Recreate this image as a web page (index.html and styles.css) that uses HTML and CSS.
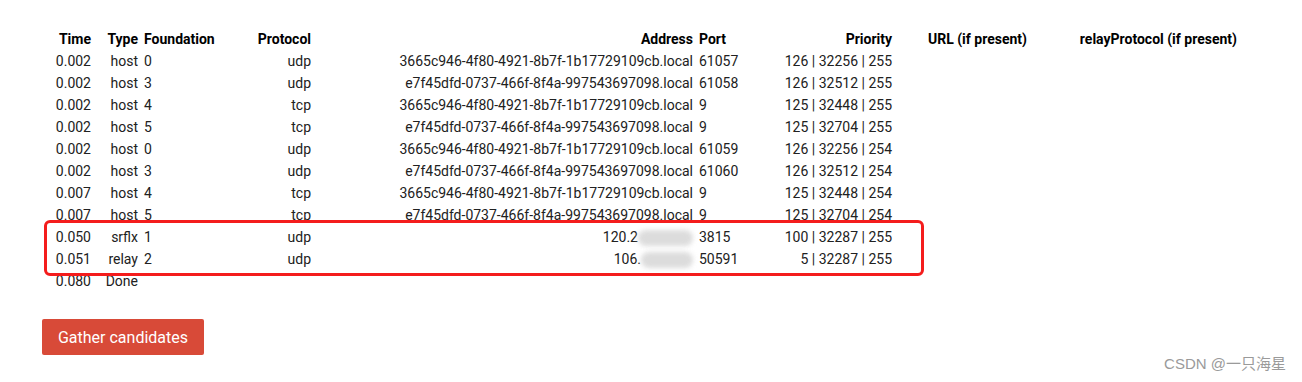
FILE: index.html
```html
<!DOCTYPE html>
<html>
<head>
<meta charset="utf-8">
<link rel="stylesheet" href="styles.css">
</head>
<body>
<main class="page">
  <div class="table-wrap">
    <table class="candidates">
      <colgroup>
        <col class="c-time"><col class="c-type"><col class="c-found"><col class="c-proto">
        <col class="c-addr"><col class="c-port"><col class="c-prio"><col class="c-url"><col class="c-relay">
      </colgroup>
      <thead>
        <tr><th>Time</th><th>Type</th><th class="l">Foundation</th><th>Protocol</th><th>Address</th><th class="l">Port</th><th>Priority</th><th>URL (if present)</th><th>relayProtocol (if present)</th></tr>
      </thead>
      <tbody>
        <tr><td>0.002</td><td>host</td><td class="l">0</td><td>udp</td><td>3665c946-4f80-4921-8b7f-1b17729109cb.local</td><td class="l">61057</td><td>126 | 32256 | 255</td><td></td><td></td></tr>
        <tr><td>0.002</td><td>host</td><td class="l">3</td><td>udp</td><td>e7f45dfd-0737-466f-8f4a-997543697098.local</td><td class="l">61058</td><td>126 | 32512 | 255</td><td></td><td></td></tr>
        <tr><td>0.002</td><td>host</td><td class="l">4</td><td>tcp</td><td>3665c946-4f80-4921-8b7f-1b17729109cb.local</td><td class="l">9</td><td>125 | 32448 | 255</td><td></td><td></td></tr>
        <tr><td>0.002</td><td>host</td><td class="l">5</td><td>tcp</td><td>e7f45dfd-0737-466f-8f4a-997543697098.local</td><td class="l">9</td><td>125 | 32704 | 255</td><td></td><td></td></tr>
        <tr><td>0.002</td><td>host</td><td class="l">0</td><td>udp</td><td>3665c946-4f80-4921-8b7f-1b17729109cb.local</td><td class="l">61059</td><td>126 | 32256 | 254</td><td></td><td></td></tr>
        <tr><td>0.002</td><td>host</td><td class="l">3</td><td>udp</td><td>e7f45dfd-0737-466f-8f4a-997543697098.local</td><td class="l">61060</td><td>126 | 32512 | 254</td><td></td><td></td></tr>
        <tr><td>0.007</td><td>host</td><td class="l">4</td><td>tcp</td><td>3665c946-4f80-4921-8b7f-1b17729109cb.local</td><td class="l">9</td><td>125 | 32448 | 254</td><td></td><td></td></tr>
        <tr><td>0.007</td><td>host</td><td class="l">5</td><td>tcp</td><td>e7f45dfd-0737-466f-8f4a-997543697098.local</td><td class="l">9</td><td>125 | 32704 | 254</td><td></td><td></td></tr>
        <tr><td>0.050</td><td>srflx</td><td class="l">1</td><td>udp</td><td>120.2<span class="mask m1"></span></td><td class="l">3815</td><td>100 | 32287 | 255</td><td></td><td></td></tr>
        <tr><td>0.051</td><td>relay</td><td class="l">2</td><td>udp</td><td>106.<span class="mask m2"></span></td><td class="l">50591</td><td>5 | 32287 | 255</td><td></td><td></td></tr>
        <tr><td>0.080</td><td>Done</td><td></td><td></td><td></td><td></td><td></td><td></td><td></td></tr>
      </tbody>
    </table>
    <div class="highlight"></div>
  </div>
  <button class="gather">Gather candidates</button>
</main>
<div class="watermark">CSDN @一只海星</div>
</body>
</html>
```

FILE: styles.css
```css
html, body {
  margin: 0;
  padding: 0;
  background: #fff;
}
body {
  font-family: Roboto, "Noto Sans", sans-serif;
  color: #212121;
  width: 1302px;
  height: 382px;
  position: relative;
  overflow: hidden;
}
.page {
  padding: 29px 0 0 42px;
}
.table-wrap {
  position: relative;
  margin-left: 8px;
}
.candidates {
  border-collapse: collapse;
  table-layout: fixed;
  width: 1190px;
  font-size: 14px;
}
.c-time { width: 44px; }
.c-type { width: 47px; }
.c-found { width: 75px; }
.c-proto { width: 98px; }
.c-addr { width: 382px; }
.c-port { width: 60px; }
.c-prio { width: 139px; }
.c-url { width: 135px; }
.c-relay { width: 210px; }
.candidates th,
.candidates td {
  padding: 0 3px;
  text-align: right;
  white-space: nowrap;
  overflow: visible;
}
.candidates th {
  font-weight: 700;
  color: #000;
  height: 21px;
  line-height: 21px;
}
.candidates td {
  height: 22px;
  line-height: 22px;
}
.candidates .l {
  text-align: left;
}
.mask {
  display: inline-block;
  vertical-align: middle;
  height: 16px;
  background: #d6d6d6;
  border-radius: 8px;
  filter: blur(2.5px);
  opacity: 0.85;
}
.m1 { width: 55px; }
.m2 { width: 52px; }
.highlight {
  position: absolute;
  left: -6px;
  top: 191px;
  width: 874px;
  height: 50px;
  border: 3px solid #f41c1c;
  border-radius: 6px;
  pointer-events: none;
}
.gather {
  display: block;
  margin-top: 27px;
  width: 162px;
  height: 36px;
  padding: 0;
  border: none;
  border-radius: 2px;
  background: #d84a38;
  color: #fff;
  font-family: Roboto, "Noto Sans", sans-serif;
  font-size: 16px;
}
.watermark {
  position: absolute;
  right: 16px;
  bottom: 9px;
  font-family: "Liberation Sans", "Noto Sans CJK SC", sans-serif;
  font-size: 15px;
  color: #9a9a9a;
}
```
